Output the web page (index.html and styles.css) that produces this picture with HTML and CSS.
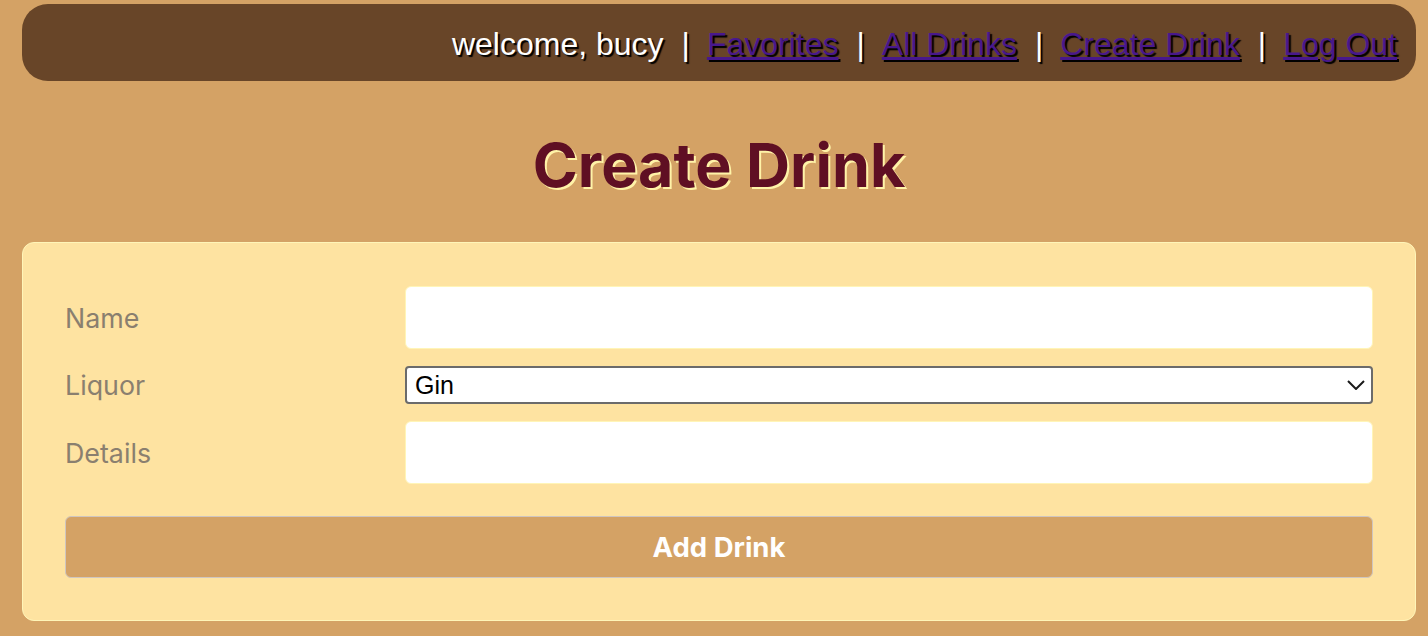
FILE: index.html
```html
<!DOCTYPE html>
<html lang="en">
<head>
<meta charset="utf-8">
<title>Create Drink</title>
<link rel="stylesheet" href="styles.css">
</head>
<body>
<div class="page">
  <nav class="topnav">
    <span class="welcome">welcome, bucy</span>
    <span class="sep">|</span>
    <a href="#" class="navlink">Favorites</a>
    <span class="sep">|</span>
    <a href="#" class="navlink">All Drinks</a>
    <span class="sep">|</span>
    <a href="#" class="navlink">Create Drink</a>
    <span class="sep">|</span>
    <a href="#" class="navlink">Log Out</a>
  </nav>
  <h1 class="title">Create Drink</h1>
  <form class="card">
    <div class="row">
      <label class="label" for="name">Name</label>
      <input class="field" id="name" type="text">
    </div>
    <div class="row">
      <label class="label" for="liquor">Liquor</label>
      <div class="select-wrap">
        <select class="select" id="liquor">
          <option>Gin</option>
          <option>Vodka</option>
          <option>Rum</option>
          <option>Tequila</option>
          <option>Whiskey</option>
        </select>
        <svg class="chevron" width="18" height="10" viewBox="0 0 18 10" aria-hidden="true">
          <path d="M1 1 L9 9 L17 1" fill="none" stroke="#1a1a1a" stroke-width="2"/>
        </svg>
      </div>
    </div>
    <div class="row">
      <label class="label" for="details">Details</label>
      <input class="field" id="details" type="text">
    </div>
    <button class="submit" type="button">Add Drink</button>
  </form>
</div>
</body>
</html>
```
FILE: styles.css
```css
html, body {
  margin: 0;
  padding: 0;
}
body {
  background: #d4a265;
  font-family: Inter, "Liberation Sans", sans-serif;
}
.page {
  padding: 4px 12px 0 22px;
}
.topnav {
  box-sizing: border-box;
  height: 77px;
  background: #684528;
  border-radius: 26px;
  display: flex;
  align-items: center;
  justify-content: flex-end;
  padding: 4px 19px 0 0;
  font-family: "Liberation Sans", Arial, sans-serif;
  font-size: 32px;
  color: #ffffff;
  text-shadow: 2px 2px 1px #000;
  white-space: pre;
}
.sep {
  margin: 0 17px 0 18px;
}
.navlink {
  color: #48188c;
  text-decoration: underline;
  text-shadow: 2px 2px 1px #000;
}
.title {
  margin: 0;
  padding: 51px 0 44px;
  text-align: center;
  font-family: Inter, sans-serif;
  font-weight: 700;
  font-size: 61px;
  line-height: 66px;
  color: #5f0f23;
  text-shadow: 2px 2px 0 #fff3a8;
}
.card {
  background: #fee3a1;
  border: 1px solid #fff5b8;
  border-radius: 12px;
  padding: 43px 42px 42px 42px;
  display: flex;
  flex-direction: column;
}
.row {
  display: grid;
  grid-template-columns: 340px 1fr;
  align-items: center;
  margin-bottom: 17px;
}
.row:nth-child(3) {
  margin-bottom: 32px;
}
.label {
  font-family: Inter, sans-serif;
  font-size: 26.8px;
  color: #8a7f6f;
}
.field {
  box-sizing: border-box;
  height: 63px;
  border: 1px solid #fff5b8;
  border-radius: 6px;
  background: #fff;
  font-size: 24px;
  padding: 0 12px;
  outline: none;
}
.select-wrap {
  position: relative;
  display: flex;
}
.select {
  flex: 1;
  box-sizing: border-box;
  height: 38px;
  border: 2px solid #6b6b6b;
  border-radius: 4px;
  background: #fff;
  font-family: "Liberation Sans", Arial, sans-serif;
  font-size: 25px;
  color: #000;
  padding: 0 8px;
  appearance: none;
  -webkit-appearance: none;
}
.chevron {
  position: absolute;
  right: 8px;
  top: 14px;
  pointer-events: none;
}
.submit {
  height: 62px;
  background: #d4a265;
  border: 1px solid #cfc6c0;
  border-radius: 6px;
  color: #fff;
  font-family: Inter, sans-serif;
  font-weight: 700;
  font-size: 27.5px;
  cursor: pointer;
}
```
